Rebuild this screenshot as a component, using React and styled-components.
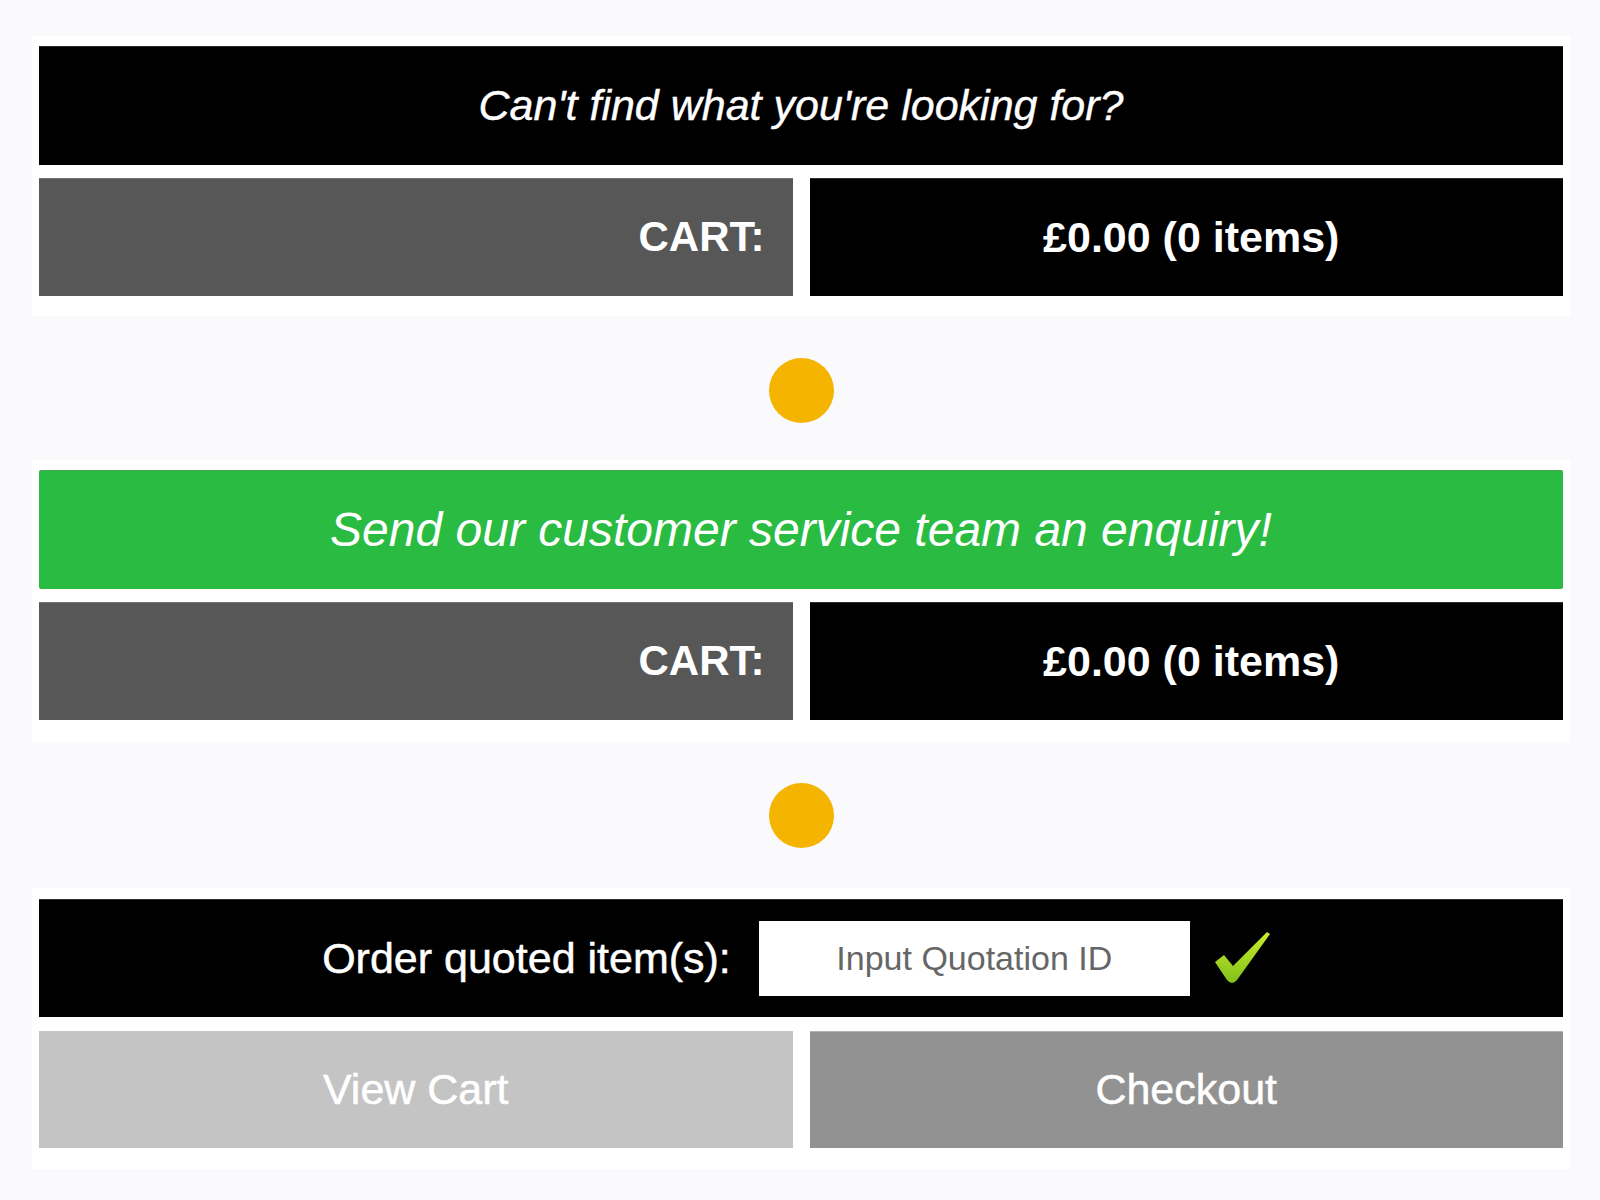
import React from "react";
import styled, { createGlobalStyle } from "styled-components";

const Global = createGlobalStyle`
  html, body { margin: 0; padding: 0; background: #fafafc; }
  body { font-family: "Liberation Sans", Arial, Helvetica, sans-serif; }
`;

const Page = styled.div`
  width: 1538px;
  padding: 36px 0 30px 32px;
  display: flex;
  flex-direction: column;
`;

const Card = styled.section`
  background: #ffffff;
  padding: ${(p) => p.$pt || 10}px 7px ${(p) => p.$pb || 20}px 7px;
  display: flex;
  flex-direction: column;
  gap: ${(p) => p.$gap || 13}px;
`;

const Banner = styled.div`
  height: 119px;
  background: ${(p) => p.$bg};
  border-radius: ${(p) => (p.$round ? "2px" : "0")};
  color: #fff;
  display: flex;
  align-items: center;
  justify-content: center;
  font-style: italic;
  font-size: ${(p) => p.$size}px;
  -webkit-text-stroke: ${(p) => p.$stroke || 0}px #fff;
  box-shadow: inset 0 1px 0 rgba(120, 120, 120, 0.35);
`;

const Row = styled.div`
  display: grid;
  grid-template-columns: 1fr 1fr;
  gap: 17px;
  height: ${(p) => p.$h || 118}px;
`;

const CartLabel = styled.div`
  background: #575757;
  color: #fff;
  font-weight: 700;
  font-size: 42px;
  display: flex;
  align-items: center;
  justify-content: flex-end;
  padding-right: 28px;
  box-shadow: inset 0 1px 0 rgba(140, 140, 140, 0.5);
`;

const CartValue = styled.div`
  background: #000;
  color: #fff;
  font-weight: 700;
  font-size: 43px;
  display: flex;
  align-items: center;
  justify-content: center;
  padding-left: 10px;
  box-shadow: inset 0 1px 0 rgba(120, 120, 120, 0.4);
`;

const DotWrap = styled.div`
  display: flex;
  justify-content: center;
  padding: ${(p) => p.$top}px 0 ${(p) => p.$bottom}px;
`;

const Dot = styled.div`
  width: 65px;
  height: 65px;
  border-radius: 50%;
  background: #f5b400;
`;

const QuoteBar = styled.div`
  height: 118px;
  background: #000;
  display: flex;
  align-items: center;
  justify-content: center;
  box-shadow: inset 0 1px 0 rgba(120, 120, 120, 0.4);
`;

const QuoteLabel = styled.label`
  color: #fff;
  font-size: 43px;
  margin-right: 28px;
  -webkit-text-stroke: 0.5px #fff;
`;

const QuoteInput = styled.input`
  width: 431px;
  height: 75px;
  box-sizing: border-box;
  border: none;
  outline: none;
  background: #fff;
  font-family: "Liberation Sans", Arial, sans-serif;
  font-size: 34px;
  text-align: center;
  color: #333;
  padding: 0;
  &::placeholder { color: #666; }
`;

const CheckBtn = styled.button`
  background: none;
  border: none;
  padding: 0;
  margin-left: 24px;
  margin-right: 10px;
  width: 56px;
  height: 54px;
  display: flex;
  cursor: pointer;
`;

const Button = styled.button`
  border: none;
  background: ${(p) => p.$bg};
  color: #fff;
  font-family: "Liberation Sans", Arial, sans-serif;
  font-size: 43px;
  -webkit-text-stroke: 0.5px #fff;
  display: flex;
  align-items: center;
  justify-content: center;
  cursor: pointer;
  box-shadow: inset 0 1px 0 rgba(200, 200, 200, 0.6);
`;

const Check = () => (
  <svg width="56" height="54" viewBox="0 0 56 54">
    <defs>
      <linearGradient id="chk" x1="0" y1="0" x2="0" y2="1">
        <stop offset="0" stopColor="#c8ec2c" />
        <stop offset="1" stopColor="#82c01a" />
      </linearGradient>
    </defs>
    <path
      d="M1 31 L10 24 L19 35 L53 1 L56 3 L23 49 Q18 55 13 49 Z"
      fill="url(#chk)"
    />
  </svg>
);

function CartRow() {
  return (
    <Row>
      <CartLabel>CART:</CartLabel>
      <CartValue>£0.00 (0 items)</CartValue>
    </Row>
  );
}

export default function App() {
  return (
    <>
      <Global />
      <Page>
        <Card>
          <Banner $bg="#000" $size={43} $stroke={0.4}>
            Can't find what you're looking for?
          </Banner>
          <CartRow />
        </Card>
        <DotWrap $top={42} $bottom={37}>
          <Dot />
        </DotWrap>
        <Card $pb={22}>
          <Banner $bg="#2abb42" $size={48} $round>
            Send our customer service team an enquiry!
          </Banner>
          <CartRow />
        </Card>
        <DotWrap $top={41} $bottom={40}>
          <Dot />
        </DotWrap>
        <Card $pt={11} $pb={21} $gap={14}>
          <QuoteBar>
            <QuoteLabel htmlFor="qid">Order quoted item(s):</QuoteLabel>
            <QuoteInput id="qid" placeholder="Input Quotation ID" />
            <CheckBtn aria-label="Submit">
              <Check />
            </CheckBtn>
          </QuoteBar>
          <Row $h={117}>
            <Button $bg="#c4c4c4">View Cart</Button>
            <Button $bg="#929292">Checkout</Button>
          </Row>
        </Card>
      </Page>
    </>
  );
}
